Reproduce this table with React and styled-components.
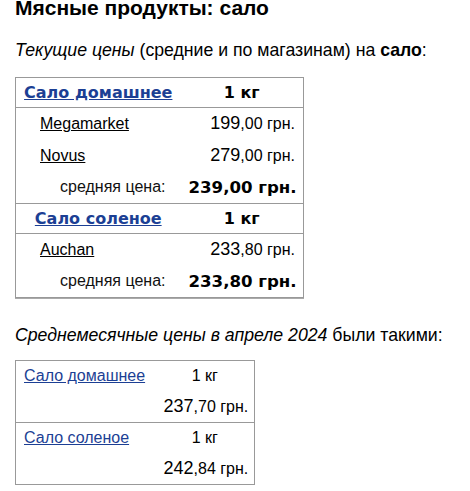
import React from 'react'
import styled, { createGlobalStyle } from 'styled-components'

const GlobalStyle = createGlobalStyle`
  body {
    margin: 0;
    background: #fff;
    color: #000;
    font-family: "Liberation Sans", Arial, sans-serif;
  }
`

const Page = styled.div`
  padding: 0 15px;
`

const Title = styled.h2`
  margin: -4px 0 0;
  font-size: 21px;
  font-weight: bold;
  line-height: 24px;
`

const Lead = styled.p`
  margin: ${(p) => p.$top}px 0 ${(p) => p.$bottom}px;
  font-size: 17.7px;
  line-height: 22px;
`

const PriceTable = styled.table`
  border-collapse: collapse;
  border: 1px solid #999;
  box-shadow: 0 1px 0 #aaa;
  width: ${(p) => p.$width}px;
  table-layout: fixed;
`

const HeadRow = styled.tr`
  border-top: 1px solid #999;
  border-bottom: 1px solid #999;
  height: 30px;
`

const Row = styled.tr`
  height: ${(p) => p.$h || 32}px;
  ${(p) => p.$split && 'border-bottom: 1px solid #999;'}
`

const Cell = styled.td`
  padding: 0 ${(p) => p.$right || 8}px 0 ${(p) => (p.$indent ? 24 : 8)}px;
  text-align: ${(p) => p.$align || 'left'};
  font-size: 16px;
  vertical-align: middle;
  white-space: nowrap;
`

const HeadLink = styled.a`
  font-family: "DejaVu Sans", Verdana, sans-serif;
  font-weight: bold;
  font-size: 16px;
  color: #1c3f94;
  text-decoration: underline;
`

const Unit = styled.span`
  font-family: "DejaVu Sans", Verdana, sans-serif;
  font-weight: bold;
  font-size: 16px;
`

const Shop = styled.a`
  color: #000;
  text-decoration: underline;
  font-size: 16px;
`

const Big = styled.span`
  font-size: 18px;
`

const Small = styled.span`
  font-size: 16px;
`

const AvgLabel = styled.span`
  font-size: 16px;
  color: #111;
`

const AvgPrice = styled.span`
  font-family: "DejaVu Sans", Verdana, sans-serif;
  font-weight: bold;
  font-size: 16.6px;
`

const MonthLink = styled.a`
  color: #1c3f94;
  text-decoration: underline;
  font-size: 16px;
`

const Price = ({ value }) => {
  const [whole, frac] = value.split(',')
  return (
    <>
      <Big>{whole}</Big>
      <Small>,{frac} грн.</Small>
    </>
  )
}

const current = [
  {
    name: 'Сало домашнее',
    shops: [
      { name: 'Megamarket', price: '199,00' },
      { name: 'Novus', price: '279,00' },
    ],
    avg: '239,00',
  },
  {
    name: 'Сало соленое',
    shops: [{ name: 'Auchan', price: '233,80' }],
    avg: '233,80',
  },
]

const monthly = [
  { name: 'Сало домашнее', price: '237,70' },
  { name: 'Сало соленое', price: '242,84' },
]

export default function App() {
  return (
    <Page>
      <GlobalStyle />
      <Title>Мясные продукты: сало</Title>
      <Lead $top={19} $bottom={16}>
        <i>Текущие цены</i> (средние и по магазинам) на <b>сало</b>:
      </Lead>
      <PriceTable $width={289}>
        <colgroup>
          <col style={{ width: 165 }} />
          <col />
        </colgroup>
        <tbody>
          {current.map((group) => (
            <React.Fragment key={group.name}>
              <HeadRow>
                <Cell $align="center">
                  <HeadLink href="#">{group.name}</HeadLink>
                </Cell>
                <Cell $align="center">
                  <Unit>1 кг</Unit>
                </Cell>
              </HeadRow>
              {group.shops.map((s) => (
                <Row key={s.name}>
                  <Cell $indent>
                    <Shop href="#">{s.name}</Shop>
                  </Cell>
                  <Cell $align="right">
                    <Price value={s.price} />
                  </Cell>
                </Row>
              ))}
              <Row>
                <Cell $align="right" $right={15}>
                  <AvgLabel>средняя цена:</AvgLabel>
                </Cell>
                <Cell $align="right">
                  <AvgPrice>{group.avg} грн.</AvgPrice>
                </Cell>
              </Row>
            </React.Fragment>
          ))}
        </tbody>
      </PriceTable>
      <Lead $top={26} $bottom={14}>
        <i>Среднемесячные цены в апреле 2024</i> были такими:
      </Lead>
      <PriceTable $width={240}>
        <colgroup>
          <col style={{ width: 140 }} />
          <col />
        </colgroup>
        <tbody>
          {monthly.map((m) => (
            <React.Fragment key={m.name}>
              <Row $h={31}>
                <Cell>
                  <MonthLink href="#">{m.name}</MonthLink>
                </Cell>
                <Cell $align="center">1 кг</Cell>
              </Row>
              <Row $h={31} $split>
                <Cell />
                <Cell $align="right">
                  <Price value={m.price} />
                </Cell>
              </Row>
            </React.Fragment>
          ))}
        </tbody>
      </PriceTable>
    </Page>
  )
}
